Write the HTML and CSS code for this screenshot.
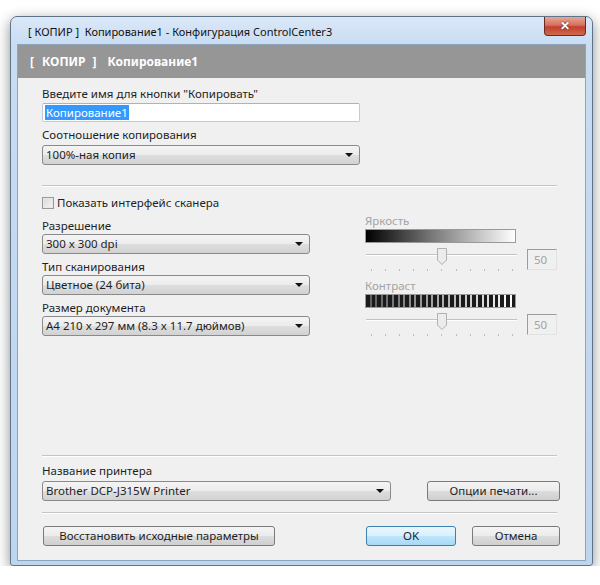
FILE: index.html
```html
<!DOCTYPE html>
<html lang="ru">
<head>
  <meta charset="UTF-8" />
  <title>Копирование1 - Конфигурация ControlCenter3</title>
  <link rel="stylesheet" href="styles.css">
</head>
<body>
  <div class="window">
    <!-- заголовок окна -->
    <div class="titlebar">
      <div class="title">[ КОПИР ]&nbsp; Копирование1 - Конфигурация ControlCenter3</div>
      <div class="close-btn">&#x2715;</div>
    </div>

    <div class="client">
      <div class="header">
        <span class="br">[</span><span class="tag">КОПИР</span><span class="br">]</span><span class="name">Копирование1</span>
      </div>

      <div class="body">
        <!-- имя кнопки -->
        <div class="label">Введите имя для кнопки "Копировать"</div>
        <div class="textbox wide"><span class="sel">Копирование1</span></div>
        <div class="label gap">Соотношение копирования</div>
        <div class="combo wide"><span>100%-ная копия</span><i class="arrow"></i></div>

        <div class="sep top-sep"></div>

        <!-- параметры сканирования -->
        <div class="scan">
          <div class="scan-left">
            <div class="check-row"><span class="checkbox"></span>Показать интерфейс сканера</div>
            <div class="label first">Разрешение</div>
            <div class="combo short"><span>300 x 300 dpi</span><i class="arrow"></i></div>
            <div class="label field">Тип сканирования</div>
            <div class="combo short"><span>Цветное (24 бита)</span><i class="arrow"></i></div>
            <div class="label field">Размер документа</div>
            <div class="combo short"><span>A4 210 x 297 мм (8.3 x 11.7 дюймов)</span><i class="arrow"></i></div>
          </div>

          <div class="scan-right">
            <div class="dim-label">Яркость</div>
            <div class="bar brightness"></div>
            <div class="slider-row">
              <svg class="slider" width="152" height="28" viewBox="0 0 152 28">
                <line x1="1" y1="8.5" x2="152" y2="8.5" stroke="#c2c2c2" />
                <line x1="1" y1="9.5" x2="152" y2="9.5" stroke="#ffffff" />
                <g stroke="#bdbdbd">
                  <line x1="6.5" y1="23" x2="6.5" y2="25" /><line x1="20.5" y1="23" x2="20.5" y2="25" />
                  <line x1="34.5" y1="23" x2="34.5" y2="25" /><line x1="48.5" y1="23" x2="48.5" y2="25" />
                  <line x1="62.5" y1="23" x2="62.5" y2="25" /><line x1="76.5" y1="23" x2="76.5" y2="25" />
                  <line x1="91.5" y1="23" x2="91.5" y2="25" /><line x1="105.5" y1="23" x2="105.5" y2="25" />
                  <line x1="119.5" y1="23" x2="119.5" y2="25" /><line x1="133.5" y1="23" x2="133.5" y2="25" />
                  <line x1="147.5" y1="23" x2="147.5" y2="25" />
                </g>
                <path d="M72.5 2.5 H81.5 V14 L77 18.5 L72.5 14 Z" fill="#ececec" stroke="#b0b0b0" />
              </svg>
              <div class="value">50</div>
            </div>

            <div class="dim-label contrast-label">Контраст</div>
            <div class="bar contrast"></div>
            <div class="slider-row">
              <svg class="slider" width="152" height="28" viewBox="0 0 152 28">
                <line x1="1" y1="8.5" x2="152" y2="8.5" stroke="#c2c2c2" />
                <line x1="1" y1="9.5" x2="152" y2="9.5" stroke="#ffffff" />
                <g stroke="#bdbdbd">
                  <line x1="6.5" y1="23" x2="6.5" y2="25" /><line x1="20.5" y1="23" x2="20.5" y2="25" />
                  <line x1="34.5" y1="23" x2="34.5" y2="25" /><line x1="48.5" y1="23" x2="48.5" y2="25" />
                  <line x1="62.5" y1="23" x2="62.5" y2="25" /><line x1="76.5" y1="23" x2="76.5" y2="25" />
                  <line x1="91.5" y1="23" x2="91.5" y2="25" /><line x1="105.5" y1="23" x2="105.5" y2="25" />
                  <line x1="119.5" y1="23" x2="119.5" y2="25" /><line x1="133.5" y1="23" x2="133.5" y2="25" />
                  <line x1="147.5" y1="23" x2="147.5" y2="25" />
                </g>
                <path d="M72.5 2.5 H81.5 V14 L77 18.5 L72.5 14 Z" fill="#ececec" stroke="#b0b0b0" />
              </svg>
              <div class="value">50</div>
            </div>
          </div>
        </div>

        <!-- нижняя часть -->
        <div class="bottom">
          <div class="sep"></div>
          <div class="label printer-label">Название принтера</div>
          <div class="printer-row">
            <div class="combo printer"><span>Brother DCP-J315W Printer</span><i class="arrow"></i></div>
            <div class="btn options">Опции печати...</div>
          </div>
          <div class="sep mid-sep"></div>
          <div class="button-row">
            <div class="btn reset">Восстановить исходные параметры</div>
            <div class="btn ok">OK</div>
            <div class="btn cancel">Отмена</div>
          </div>
        </div>
      </div>
    </div>
  </div>
</body>
</html>
```

FILE: styles.css
```css
body {
  margin: 0;
  background: #ffffff;
  font-family: "Noto Sans", "Liberation Sans", sans-serif;
  font-size: 11.5px;
  color: #1e1e1e;
}

/* окно */
.window {
  margin: 16px 0 0 10px;
  width: 569px;
  height: 544px;
  padding: 0 6px 4px 6px;
  border: 1px solid #5f7389;
  border-radius: 7px 7px 3px 3px;
  background: linear-gradient(to bottom, #dbe9f8 0, #c8dcf2 28px, #bed5ee 100%);
  box-shadow: 0 4px 14px rgba(0, 0, 0, 0.45);
  display: flex;
  flex-direction: column;
}

.titlebar {
  height: 27px;
  display: flex;
  justify-content: space-between;
  align-items: flex-start;
}

.title {
  margin: 7px 0 0 11px;
  font-size: 11px;
  line-height: 15px;
  color: #111;
}

.close-btn {
  width: 42px;
  height: 19px;
  border: 1px solid #6b2a20;
  border-top: none;
  border-radius: 0 0 4px 4px;
  background: linear-gradient(to bottom, #e5a79b 0, #d7705e 45%, #c2402c 55%, #d06a4c 100%);
  color: #fff;
  font-weight: bold;
  font-size: 12px;
  line-height: 18px;
  text-align: center;
  box-sizing: border-box;
  text-shadow: 0 0 2px #5a1a10;
}

.client {
  flex: 1;
  border: 1px solid #8ea3bd;
  background: #f0f0f0;
  display: flex;
  flex-direction: column;
}

.header {
  height: 33px;
  background: #969696;
  color: #fff;
  font-weight: bold;
  font-size: 12px;
  line-height: 33px;
  padding-left: 12px;
}

.header .tag {
  margin: 0 7px 0 8px;
}

.header .name {
  margin-left: 11px;
}

.body {
  flex: 1;
  padding: 8px 25px 14px 24px;
  display: flex;
  flex-direction: column;
}

.label {
  line-height: 15px;
}

.label.gap {
  margin-top: 5px;
}

.label.first {
  margin-top: 8px;
}

.label.field {
  margin-top: 5px;
}

/* поля ввода */
.textbox {
  margin-top: 2px;
  height: 19px;
  box-sizing: border-box;
  border: 1px solid #c3ccd6;
  border-top-color: #abb3bd;
  border-radius: 2px;
  background: #fff;
  padding: 1px 2px;
  line-height: 15px;
}

.sel {
  background: #3399ff;
  color: #fff;
  padding: 0 1px;
}

.wide {
  width: 318px;
}

.combo {
  margin-top: 3px;
  height: 20px;
  box-sizing: border-box;
  border: 1px solid #8a8a8a;
  border-radius: 3px;
  background: linear-gradient(to bottom, #f4f4f4 0, #ececec 50%, #dedede 51%, #d2d2d2 100%);
  display: flex;
  align-items: center;
  justify-content: space-between;
  padding: 0 6px 0 3px;
  line-height: 16px;
}

.combo.short {
  width: 268px;
  margin-top: 1px;
}

.arrow {
  width: 0;
  height: 0;
  border-left: 4px solid transparent;
  border-right: 4px solid transparent;
  border-top: 4px solid #111;
}

.sep {
  border-top: 1px solid #c4c4c4;
  border-bottom: 1px solid #fff;
  margin-right: 3px;
}

.top-sep {
  margin-top: 20px;
}

/* сканирование */
.scan {
  display: flex;
}

.scan-left {
  width: 268px;
}

.check-row {
  margin-top: 9px;
  display: flex;
  align-items: center;
  line-height: 14px;
}

.checkbox {
  width: 10px;
  height: 10px;
  border: 1px solid #999;
  background: linear-gradient(135deg, #d8d8d8, #f6f6f6);
  box-shadow: inset 0 0 0 1px #e8e8e8;
  margin-right: 3px;
}

.scan-right {
  margin-left: 55px;
  padding-top: 27px;
}

.dim-label {
  color: #a3a3a3;
  line-height: 14px;
}

.contrast-label {
  margin-top: 5px;
}

.bar {
  margin-top: 1px;
  width: 151px;
  height: 14px;
  box-sizing: border-box;
  border: 1px solid #9a9a9a;
}

.brightness {
  background: linear-gradient(to right, #000 0, #7a7a7a 45%, #fff 100%);
}

.contrast {
  background:
    repeating-linear-gradient(to right, #1a1a1a 0, #1a1a1a 3.6px, transparent 3.6px, transparent 5.6px),
    linear-gradient(to right, #5a5a5a, #ffffff);
}

.slider-row {
  display: flex;
  align-items: flex-start;
  margin-top: 3px;
}

.slider {
  display: block;
}

.value {
  margin: 3px 0 0 10px;
  width: 30px;
  height: 21px;
  box-sizing: border-box;
  border: 1px solid #e2e2e2;
  border-top-color: #9c9c9c;
  border-left-color: #9c9c9c;
  color: #a3a3a3;
  line-height: 19px;
  padding-left: 6px;
}

/* нижняя часть */
.bottom {
  margin-top: auto;
}

.printer-label {
  margin-top: 6px;
}

.printer-row {
  margin-top: 3px;
  display: flex;
  justify-content: space-between;
}

.combo.printer {
  margin-top: 0;
  width: 349px;
}

.btn {
  height: 20px;
  box-sizing: border-box;
  border: 1px solid #7a7a7a;
  border-radius: 3px;
  background: linear-gradient(to bottom, #f4f4f4 0, #ebebeb 50%, #dddddd 51%, #cfcfcf 100%);
  text-align: center;
  line-height: 18px;
}

.options {
  width: 133px;
}

.mid-sep {
  margin-top: 11px;
}

.button-row {
  margin-top: 12px;
  display: flex;
}

.reset {
  width: 232px;
  margin-left: 1px;
}

.ok {
  margin-left: auto;
  width: 90px;
  border-color: #3c7fb1;
  background: linear-gradient(to bottom, #eaf6fd 0, #d9f0fc 50%, #bee6fd 51%, #a7d9f5 100%);
}

.cancel {
  margin-left: 16px;
  width: 88px;
}
```
